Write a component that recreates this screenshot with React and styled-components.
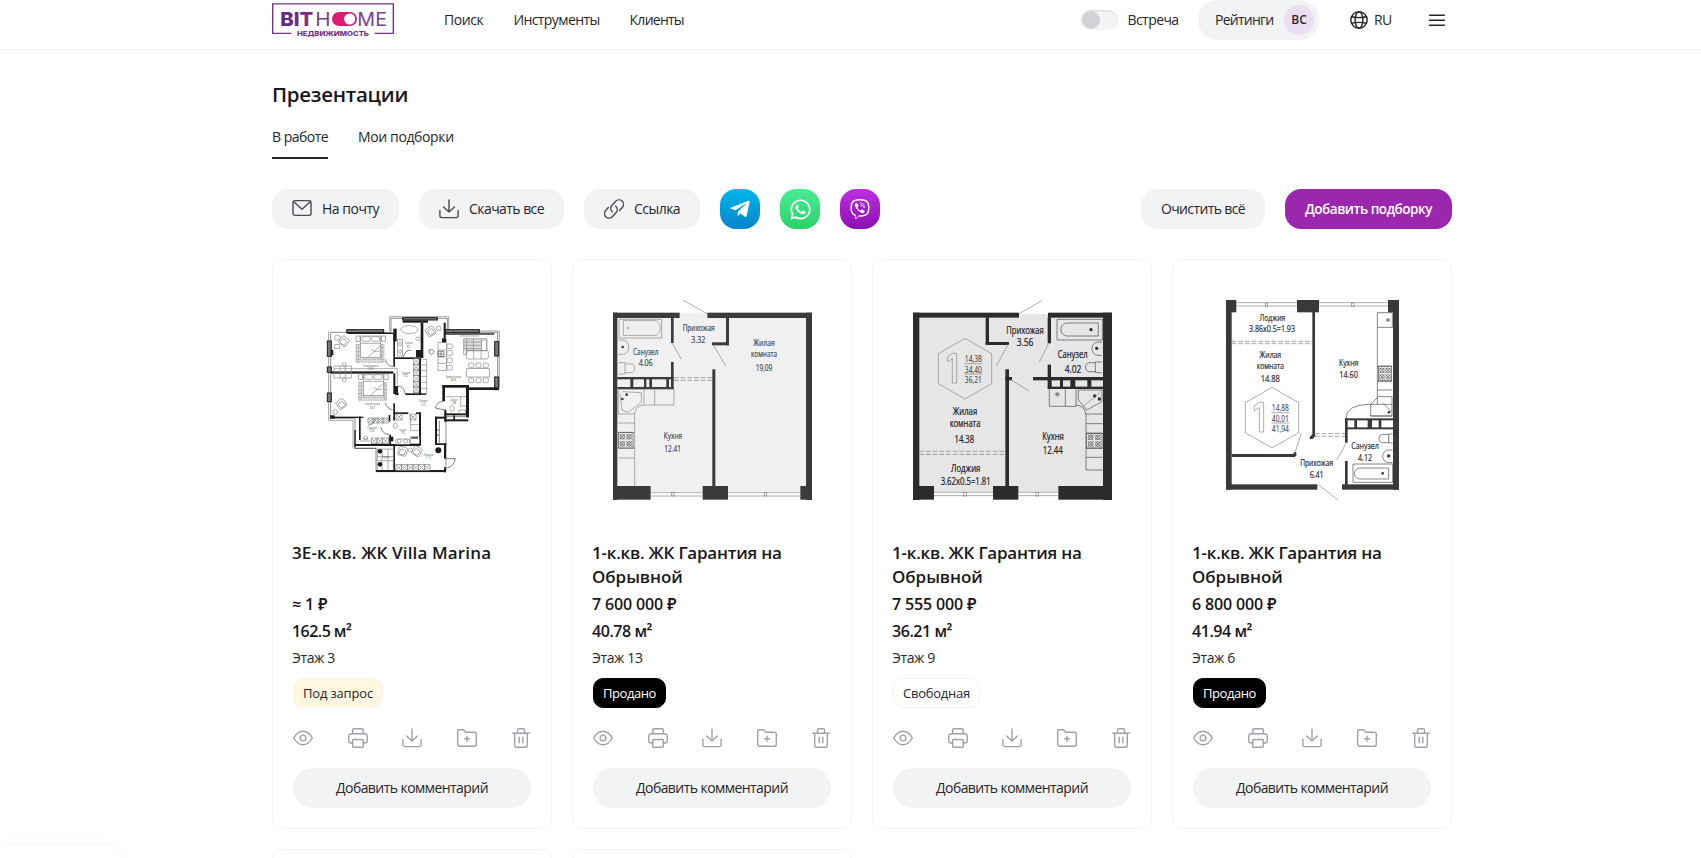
import React from 'react';
import styled, { createGlobalStyle, css } from 'styled-components';
import { FaWhatsapp, FaViber, FaTelegramPlane } from 'react-icons/fa';

const GlobalStyle = createGlobalStyle`
  *, *::before, *::after { box-sizing: border-box; }
  body {
    margin: 0;
    background: #fff;
    color: #27272b;
    font: 400 14px/20px "Open Sans", "Noto Sans", sans-serif;
  }
  button { font: inherit; color: inherit; border: 0; cursor: pointer; }
  svg { display: block; }
`;

const tracked = css`
  letter-spacing: ${(p) => p.$track || 0}px;
  white-space: nowrap;
`;

/* ---------- page frame ---------- */

const Page = styled.div`
  height: 100vh;
  overflow: hidden;
`;

const Container = styled.div`
  width: 1180px;
  margin-left: 272px;
`;

const Header = styled.header`
  height: 50px;
  border-bottom: 1px solid #f2f3f5;
`;

const HeaderRow = styled(Container)`
  display: flex;
  align-items: center;
  height: 40px;
  padding-right: 7px;
`;

const Nav = styled.nav`
  display: flex;
  gap: 30px;
  margin-left: 50px;
  flex: 1;
`;

const NavLink = styled.a`
  ${tracked}
`;

const Toggle = styled.span`
  width: 37px;
  height: 20px;
  border-radius: 10px;
  padding: 1px;
  background: #f3f4f6;
  box-shadow: inset 0 1px 2px rgba(0, 0, 0, 0.12);
`;

const Knob = styled.span`
  display: block;
  width: 18px;
  height: 18px;
  border-radius: 50%;
  background: #d1d1d6;
`;

const ToggleLabel = styled.span`
  ${tracked}
  margin: 0 19.5px 0 10px;
  width: 51px;
`;

const RatingButton = styled.button`
  display: flex;
  align-items: center;
  justify-content: space-between;
  width: 121px;
  height: 40px;
  padding: 0 5px 0 17px;
  border-radius: 20px;
  background: #f2f3f5;
`;

const RatingText = styled.span`
  ${tracked}
`;

const Avatar = styled.span`
  display: grid;
  place-items: center;
  width: 30px;
  height: 30px;
  border-radius: 50%;
  background: #ebdef0;
  font-size: 12px;
  font-weight: 600;
`;

const Language = styled.span`
  ${tracked}
  display: flex;
  align-items: center;
  gap: 6px;
  width: 42px;
  margin: 0 37px 0 31px;
`;

/* ---------- title, tabs, toolbar ---------- */

const Title = styled.h1`
  margin: 30px 0 19px;
  font-size: 20.5px;
  line-height: 28px;
  font-weight: 600;
  color: #18181b;
  letter-spacing: -0.28px;
`;

const Tabs = styled.div`
  display: flex;
  gap: 30px;
  margin-bottom: 30px;
`;

const Tab = styled.a`
  ${tracked}
  padding-bottom: 10px;
  border-bottom: 2px solid ${(p) => (p.$active ? '#27272b' : 'transparent')};
`;

const Toolbar = styled.div`
  display: flex;
  gap: 20px;
  margin-bottom: 30px;
`;

const ToolButton = styled.button`
  ${tracked}
  display: flex;
  align-items: center;
  gap: 10px;
  height: 40px;
  padding: 0 20px;
  border-radius: 16px;
  background: #f2f3f5;
  svg { color: #4a4a4f; }
`;

const ClearButton = styled(ToolButton)`
  margin-left: auto;
`;

const PrimaryButton = styled(ToolButton)`
  background: #9b27af;
  color: #fff;
  font-size: 13.5px;
  font-weight: 600;
`;

const Messenger = styled.button`
  display: grid;
  place-items: center;
  width: 40px;
  height: 40px;
  padding: 0;
  border-radius: 16px;
  color: #fff;
  background: linear-gradient(${(p) => p.$from}, ${(p) => p.$to});
`;

/* ---------- cards ---------- */

const Grid = styled.div`
  display: grid;
  grid-template-columns: repeat(4, 280px);
  gap: 20px;
`;

const CardBox = styled.article`
  height: 570px;
  padding: 20px;
  border: 1px solid #f2f3f5;
  border-radius: 10px;
`;

const PlanFrame = styled.div`
  display: grid;
  place-items: center;
  height: 240px;
  margin-bottom: 21px;
`;

const CardTitle = styled.h2`
  ${tracked}
  margin: 0 0 3px -1px;
  height: 48px;
  font-size: 17px;
  line-height: 24px;
  font-weight: 600;
  color: #18181b;
`;

const TitleTail = styled.span`
  display: block;
  letter-spacing: -0.05px;
`;

const Fact = styled.p`
  ${tracked}
  margin: 0 0 3px -1px;
  font-size: 16px;
  line-height: 24px;
  font-weight: 600;
  color: #18181b;
`;

const Floor = styled.p`
  ${tracked}
  margin: 0 0 8px -1px;
  line-height: 24px;
`;

const badgeTones = {
  request: css`background: #fff7df; border-color: #f2f3f5;`,
  sold: css`background: #000; border-color: #000; color: #fff;`,
  free: css`background: #fff; border-color: #f2f3f5;`,
};

const Badge = styled.div`
  ${tracked}
  display: flex;
  align-items: center;
  width: fit-content;
  height: 30px;
  padding: 0 9px;
  border: 1px solid;
  border-radius: 10px;
  font-size: 13px;
  ${(p) => badgeTones[p.$tone]}
`;

const Actions = styled.div`
  display: flex;
  justify-content: space-between;
  margin: 20px 0;
  color: #a1a1aa;
`;

const CommentButton = styled.button`
  ${tracked}
  width: 100%;
  height: 40px;
  padding: 0;
  border-radius: 20px;
  background: #f2f3f5;
`;

const DockPanel = styled.div`
  position: fixed;
  left: 0;
  bottom: 0;
  width: 120px;
  height: 12px;
  border-radius: 0 20px 0 0;
  background: #fff;
  box-shadow: 0 0 15px rgba(0, 0, 0, 0.05);
`;

/* ---------- icons ---------- */

const Line = styled.svg`
  fill: none;
  stroke: currentColor;
  stroke-width: ${(p) => p.$w || 1.4};
  stroke-linecap: round;
  stroke-linejoin: round;
  flex: none;
`;

const Icon = ({ children }) => (
  <Line width="20" height="20" viewBox="0 0 20 20">{children}</Line>
);

const MailIcon = () => (
  <Icon><rect x="1" y="1.6" width="18" height="14.8" rx="1.8" /><path d="M1.5 2.6 10 10.2l8.500-7.600" /></Icon>
);
const DownloadIcon = () => (
  <Icon><path d="M10 1v12M4.600 8 10 13l5.400-5M.9 11.500V16.600a2 2 0 0 0 2 2h14.200a2 2 0 0 0 2-2v-5.100" /></Icon>
);
const LinkIcon = () => (
  <Icon>
    <path d="M8.300 12.800a4.500 4.500 0 0 1-.5-6.300l3.900-4.200a4.500 4.500 0 0 1 6.600 6.200L15.600 11.400" />
    <path d="M11.700 7.200a4.500 4.500 0 0 1 .5 6.300l-3.900 4.200a4.500 4.500 0 0 1-6.600-6.200L4.400 8.600" />
  </Icon>
);
const EyeIcon = () => (
  <Icon><path d="M.7 10C3 6 6.300 3.200 10 3.200S17 6 19.300 10C17 14 13.700 16.800 10 16.800S3 14 .7 10Z" /><circle cx="10" cy="10" r="2.900" /></Icon>
);
const PrintIcon = () => (
  <Icon>
    <path d="M4.700 5.800V1.700a1 1 0 0 1 1-1h8.600a1 1 0 0 1 1 1v4.100M4.700 15H3a2.300 2.300 0 0 1-2.300-2.300V8A2.200 2.200 0 0 1 3 5.800h14A2.200 2.200 0 0 1 19.300 8v4.700A2.300 2.300 0 0 1 17 15h-1.700" />
    <rect x="4.700" y="11.500" width="10.600" height="7.800" rx="1" />
  </Icon>
);
const FolderIcon = () => (
  <Icon>
    <path d="M.7 3.200A1.500 1.500 0 0 1 2.200 1.700h4.300l2.200 2.600h8.800A1.800 1.800 0 0 1 19.300 6v10.500a1.800 1.800 0 0 1-1.800 1.800h-15A1.800 1.800 0 0 1 .7 16.500ZM10 8.300v5M7.500 10.800h5" />
  </Icon>
);
const TrashIcon = () => (
  <Icon>
    <path d="M1.700 5.300h16.600M3.700 5.300v12.400a1.500 1.500 0 0 0 1.500 1.500h9.600a1.500 1.500 0 0 0 1.500-1.500V5.300M6.500 5.300V2.200A1.400 1.400 0 0 1 7.900.8h4.200a1.400 1.400 0 0 1 1.400 1.400v3.100M8.200 9.300v5.500M11.800 9.300v5.500" />
  </Icon>
);
const GlobeIcon = () => (
  <Line width="18" height="18" viewBox="0 0 18 18">
    <circle cx="9" cy="9" r="8.200" /><ellipse cx="9" cy="9" rx="3.900" ry="8.200" /><path d="M1.600 5.800c4.500 1 10.300 1 14.800 0M1.600 12.200c4.500-1 10.300-1 14.800 0" />
  </Line>
);
const MenuIcon = () => (
  <Line width="16" height="14" viewBox="0 0 16 14"><path d="M.5 2.300h15M.5 7.300h15M.5 12.200h15" /></Line>
);

const Logo = () => (
  <svg width="122" height="34" viewBox="36 9 366 102" fontFamily="Inter, sans-serif">
    <defs>
      <linearGradient id="brand" x1="0" x2="1"><stop offset="0" stopColor="#5c2a86" /><stop offset="1" stopColor="#8b2c80" /></linearGradient>
      <linearGradient id="pill" x1="0" x2="1"><stop offset="0" stopColor="#e6156b" /><stop offset="1" stopColor="#c02c7d" /></linearGradient>
    </defs>
    <path d="M94 100H38V11.500H400V100H344" fill="none" stroke="#703585" strokeWidth="4.200" />
    <text x="61" y="78" fontSize="57" fontWeight="800" fill="url(#brand)" textLength="99" lengthAdjust="spacingAndGlyphs">BIT</text>
    <text x="166" y="78" fontSize="57" fontWeight="400" fill="#7c4290" textLength="46" lengthAdjust="spacingAndGlyphs">H</text>
    <rect x="216" y="36" width="75" height="42" rx="21" fill="url(#pill)" />
    <circle cx="269" cy="57" r="16.500" fill="#fff" />
    <text x="292" y="78" fontSize="57" fontWeight="400" fill="#7c4290" textLength="89" lengthAdjust="spacingAndGlyphs">ME</text>
    <text x="111" y="107.500" fontSize="20" fontWeight="800" fill="#703585" textLength="216" lengthAdjust="spacingAndGlyphs">НЕДВИЖИМОСТЬ</text>
  </svg>
);

/* ---------- floor plans ---------- */

const PlanSvg = styled.svg`
  font-family: "Open Sans", sans-serif;
  font-size: 28px;
  .w { fill: ${(p) => p.$wall}; }
  .l { fill: none; stroke: #85858a; stroke-width: 2; }
  .k { fill: none; stroke: #4a4a4d; stroke-width: 2; }
  .d { fill: none; stroke: #929296; stroke-width: 2.5; stroke-dasharray: 14 6; }
  text { fill: ${(p) => p.$ink}; stroke: ${(p) => p.$ink}; stroke-width: ${(p) => (p.$fine ? 0 : 0.7)}px; }
  .mark text { stroke-width: 0.3px; fill: #4c4c50; }
`;

/* A caption centred on x and squeezed to the given width. */
const Cap = ({ x, y, w, children, size }) => (
  <text x={x - w / 2} y={y} textLength={w} lengthAdjust="spacingAndGlyphs" fontSize={size}>{children}</text>
);

const Walls = ({ list }) => list.map(([x, y, w, h]) => <rect key={`${x}-${y}-${w}`} className="w" x={x} y={y} width={w} height={h} />);

const Hob = ({ x, y, w, h }) => (
  <g className="k">
    <rect x={x} y={y} width={w} height={h} />
    {[0.27, 0.73].map((a) => [0.27, 0.73].map((b) => (
      <g key={`${a}${b}`}>
        <circle cx={x + w * a} cy={y + h * b} r="7" />
        <path d={`M${x + w * a - 8} ${y + h * b - 8}l16 16m0-16l-16 16`} />
      </g>
    )))}
  </g>
);

const AreaMark = ({ cx, cy, lines }) => (
  <g className="mark">
    <path className="l" d={`M${cx} ${cy - 91}L${cx + 80} ${cy - 45}V${cy + 45}L${cx} ${cy + 91}L${cx - 80} ${cy + 45}V${cy - 45}Z`} />
    <path className="l" d={`M${cx - 54} ${cy - 34}L${cx - 38} ${cy - 46}H${cx - 25}V${cy + 43}H${cx - 38}V${cy - 30}L${cx - 52} ${cy - 21}Z`} />
    <path className="l" d={`M${cx - 2} ${cy - 15}h54M${cx - 2} ${cy + 16}h54`} />
    <Cap x={cx + 25} y={cy - 19} w={51} size={26}>{lines[0]}</Cap>
    <Cap x={cx + 25} y={cy + 12} w={51} size={26}>{lines[1]}</Cap>
    <Cap x={cx + 25} y={cy + 43} w={51} size={26}>{lines[2]}</Cap>
  </g>
);

const PlanGrey = () => (
  <PlanSvg width="200" height="200" viewBox="36 30 600 600" $wall="#3b3b3c" $ink="#4d4d50">
    <path d="M52 84H618V606H52Z" fill="#f0f0f0" />
    <rect x="240" y="68" width="82" height="20" fill="#f0f0f0" />
    <Walls list={[[39, 68, 200, 16], [322, 68, 314, 16], [39, 68, 13, 562], [618, 68, 18, 562], [39, 588, 113, 41], [308, 588, 76, 41], [601, 588, 35, 41], [337, 238, 9, 352], [378, 84, 9, 82], [336, 157, 51, 9], [213, 84, 8, 75], [213, 216, 8, 80], [52, 261, 169, 7], [52, 291, 169, 6], [91, 264, 9, 30], [132, 264, 7, 30], [148, 264, 8, 30], [199, 264, 8, 30]]} />
    <path className="l" d="M250 31L322 72M217 160L244 208M341 166L377 228M152 608H308M152 618H308M384 608H601M384 618H601M57 88H185V144H57ZM70 92H165a16 22 0 0 1 0 44H70ZM55 298H222V345H132Q106 347 104 372H55ZM132 299V345M164 299V345M60 310L66 360L84 367M68 305L124 308V337L84 367M104 372V588M55 399H104M55 427H104M55 475H104M55 504H104M55 150h14a17 21 0 0 1 0 43h-14M55 218h20v34h-20M75 222h22a12 14 0 0 1 0 26h-22" />
    <rect x="214" y="607" width="8" height="11" className="l" /><rect x="493" y="607" width="7" height="11" className="l" />
    <circle cx="85" cy="114" r="3" className="l" /><circle cx="68" cy="171" r="4" className="w" /><circle cx="67" cy="327" r="4" className="w" /><circle cx="80" cy="314" r="4" className="w" />
    <path className="d" d="M222 263H337M222 271H337" />
    <Hob x={55} y={428} w={44} h={46} />
    <Cap x={296} y={123} w={96}>Прихожая</Cap><Cap x={295} y={159} w={42}>3.32</Cap>
    <Cap x={492} y={169} w={64}>Жилая</Cap><Cap x={492} y={201} w={78}>комната</Cap><Cap x={492} y={242} w={50}>19,09</Cap>
    <Cap x={137} y={194} w={76}>Санузел</Cap><Cap x={137} y={228} w={42}>4.06</Cap>
    <Cap x={219} y={446} w={55}>Кухня</Cap><Cap x={218} y={486} w={50}>12.41</Cap>
  </PlanSvg>
);

const PlanDark = () => (
  <PlanSvg width="200" height="200" viewBox="36 30 600 600" $wall="#2c2c2e" $ink="#232325">
    <path d="M52 82H612V606H52Z" fill="#e6e6e7" />
    <rect x="358" y="72" width="86" height="20" fill="#e6e6e7" />
    <Walls list={[[39, 68, 318, 15], [444, 68, 192, 15], [39, 68, 19, 562], [609, 68, 27, 562], [39, 588, 63, 41], [279, 588, 76, 41], [475, 588, 161, 41], [257, 82, 10, 82], [257, 156, 70, 9], [316, 238, 11, 352], [316, 261, 20, 10], [399, 261, 210, 10], [443, 82, 10, 78], [443, 224, 10, 46], [443, 290, 166, 7], [443, 264, 12, 30], [480, 264, 9, 30], [511, 264, 15, 30], [562, 264, 12, 30]]} />
    <path className="l" d="M358 71L427 31M325 162L289 228M446 160L418 216M336 271L386 302M102 607H279M102 617H279M355 607H475M355 617H475" />
    <path className="k" d="M471 88H607V150H471ZM595 99V138H501a18 19 0 0 1 0-39ZM448 298V349H528V298M496 298V349M528 345Q555 347 557 372H608M535 300V330L560 360L606 335V300ZM558 372V540H608M558 401H608M558 429H608M558 475H608M558 502H608M606 156h-12a18 20 0 0 0 0 40h12M606 216h-20v32h20M586 218h-20a13 14 0 0 0 0 27h20M464 313h16M468 306l8 14M476 306l-8 14" />
    <rect x="191" y="607" width="8" height="11" className="l" /><rect x="408" y="607" width="8" height="11" className="l" />
    <circle cx="573" cy="119" r="5" className="w" /><circle cx="590" cy="175" r="5" className="w" /><circle cx="584" cy="318" r="5" className="w" /><circle cx="598" cy="327" r="5" className="w" />
    <path className="l" d="M548 350L600 308" />
    <path className="d" d="M58 484H316M58 493H316" />
    <Hob x={560} y={430} w={46} h={44} />
    <AreaMark cx={195} cy={236} lines={['14,38', '34,40', '36,21']} />
    <Cap x={375} y={131} w={112} size={30}>Прихожая</Cap><Cap x={375} y={167} w={50} size={30}>3.56</Cap>
    <Cap x={518} y={205} w={90} size={30}>Санузел</Cap><Cap x={519} y={248} w={50} size={30}>4.02</Cap>
    <Cap x={195} y={375} w={73} size={30}>Жилая</Cap><Cap x={195} y={412} w={92} size={30}>комната</Cap><Cap x={193} y={459} w={59} size={30}>14.38</Cap>
    <Cap x={197} y={545} w={88} size={30}>Лоджия</Cap><Cap x={197} y={585} w={150} size={30}>3.62x0.5=1.81</Cap>
    <Cap x={459} y={450} w={65} size={30}>Кухня</Cap><Cap x={458} y={493} w={60} size={30}>12.44</Cap>
  </PlanSvg>
);

const PlanWhite = () => (
  <PlanSvg width="200" height="200" viewBox="6 30 600 600" $wall="#39393b" $ink="#303033">
    <Walls list={[[48, 30, 17, 569], [549, 30, 18, 569], [48, 30, 31, 37], [261, 30, 66, 37], [534, 30, 33, 37], [307, 66, 8, 372], [48, 583, 274, 16], [396, 583, 171, 16], [65, 492, 190, 9], [405, 385, 144, 6], [405, 412, 144, 6], [405, 385, 8, 73], [405, 513, 8, 72], [433, 388, 8, 26], [473, 388, 13, 26], [506, 388, 8, 26]]} />
    <path className="w" d="M299 441l10-10 8 5-8 10-9 2zM249 494l4-8 6 1v12h-8z" />
    <path className="l" d="M79 38H261M79 48H261M327 38H534M327 48H534M327 585L384 630M255 488L274 430M408 460L381 510" />
    <path className="k" d="M502 68H547V112H502ZM502 112V343H547M502 228H547M502 275H547M502 300H547M502 343H475Q406 345 408 387M482 378V343L505 320H546V378ZM482 378H546M520 340L545 366M429 522H548V577H429ZM527 90h14M530 84l8 12M538 84l-8 12" />
    <path className="k" d="M536 534V567H450a16 16 0 0 1 0-33ZM548 432h-12v27h12M536 433h-20a13 13 0 0 0 0 25h20M548 480h-12a18 19 0 0 0 0 38h12" />
    <rect x="166" y="39" width="7" height="10" className="l" /><rect x="424" y="39" width="8" height="10" className="l" />
    <circle cx="518" cy="550" r="4" className="w" /><circle cx="536" cy="498" r="5" className="w" /><circle cx="537" cy="367" r="4" className="w" />
    <path className="d" d="M65 154H307M65 161H307M315 431H405M315 439H405" />
    <Hob x={505} y={230} w={40} h={42} />
    <AreaMark cx={186} cy={383} lines={['14,88', '40,01', '41,94']} />
    <Cap x={187} y={92} w={77}>Лоджия</Cap><Cap x={186} y={126} w={138}>3.86x0.5=1.93</Cap>
    <Cap x={181} y={203} w={65}>Жилая</Cap><Cap x={181} y={236} w={81}>комната</Cap><Cap x={181} y={277} w={57}>14.88</Cap>
    <Cap x={416} y={227} w={58}>Кухня</Cap><Cap x={416} y={263} w={56}>14.60</Cap>
    <Cap x={320} y={529} w={99}>Прихожая</Cap><Cap x={320} y={564} w={42}>6.41</Cap>
    <Cap x={465} y={478} w={82}>Санузел</Cap><Cap x={465} y={514} w={42}>4.12</Cap>
  </PlanSvg>
);

const Bed = ({ x, y }) => (
  <g>
    <rect x={x} y={y + 25} width="84" height="54" fill="#dedede" />
    <path className="l" d={`M${x} ${y + 25}h84v54h-84zM${x} ${y + 35}h84M${x} ${y + 47}h84M${x} ${y + 59}h84M${x} ${y + 70}h84M${x + 7} ${y + 25}v54M${x + 77} ${y + 25}v54`} strokeDasharray="4 3" />
    <rect x={x + 14} y={y} width="60" height="65" fill="#fff" />
    <g className="l">
      <rect x={x + 14} y={y} width="60" height="65" />
      <rect x={x + 18} y={y + 2} width="24" height="14" rx="3" /><rect x={x + 46} y={y + 2} width="24" height="14" rx="3" />
      <path d={`M${x + 14} ${y + 22}h60M${x + 35} ${y + 65}l38-36M${x + 45} ${y + 40}q14 12 26 4`} />
      <rect x={x} y={y} width="12" height="16" /><rect x={x + 76} y={y} width="12" height="16" />
    </g>
  </g>
);

const Armchair = ({ x, y, r }) => (
  <g className="l" transform={`rotate(${r} ${x} ${y})`}><rect x={x - 13} y={y - 13} width="26" height="26" rx="5" /><rect x={x - 8} y={y - 6} width="16" height="16" rx="3" /></g>
);

const Wardrobe = ({ x, y, n, vertical, s = 20 }) => (
  <g className="l">
    {Array.from({ length: n }, (_, i) => {
      const px = vertical ? x : x + i * s;
      const py = vertical ? y + i * s : y;
      return <g key={i}><rect x={px} y={py} width={s} height={s} /><path d={`M${px} ${py}l${s} ${s}m0-${s}l-${s} ${s}`} /></g>;
    })}
  </g>
);

/* Window sections of the outer wall: two dark edges with a pale core. */
const windows = [[109, 88, 113, 11], [277, 52, 106, 9], [405, 88, 104, 11], [51, 122, 14, 48], [51, 200, 14, 18], [51, 278, 14, 28], [553, 124, 14, 45], [553, 230, 14, 40]];

const PlanVilla = () => (
  <PlanSvg width="200" height="200" viewBox="6 0 600 600" $wall="#1c1c1e" $ink="#444" $fine>
    <path d="M62 97V355H135V445H198V515H408V350H475V268H563V97H412V55H243V97Z" fill="none" stroke="#77777a" strokeWidth="2.500" />
    <path d="M56 93V361H129V445M239 93V50H416V93H568V262" fill="none" stroke="#77777a" strokeWidth="2" />
    <g fill="#77777a" stroke="#1c1c1e" strokeWidth="3">{windows.map(([x, y, w, h]) => <rect key={`${x}-${y}`} x={x + 1} y={y + 1} width={w - 2} height={h - 2} />)}</g>
    <Walls list={[[278, 61, 76, 7], [112, 98, 138, 4], [250, 86, 10, 38], [250, 100, 5, 100], [62, 214, 188, 7], [250, 220, 6, 40], [250, 258, 14, 24], [254, 172, 78, 5], [332, 68, 8, 106], [327, 175, 6, 108], [255, 280, 11, 5], [286, 280, 62, 5], [401, 68, 6, 48], [396, 115, 13, 13], [405, 100, 148, 4], [397, 255, 80, 8], [470, 262, 95, 8], [397, 256, 8, 48], [468, 262, 9, 90], [403, 329, 6, 36], [403, 340, 72, 6], [403, 358, 72, 6], [62, 150, 8, 16], [60, 346, 14, 10], [60, 350, 100, 4], [147, 350, 5, 70], [133, 390, 4, 52], [250, 310, 5, 52], [236, 345, 5, 20], [250, 337, 45, 5], [318, 337, 13, 5], [327, 337, 6, 100], [375, 350, 34, 6], [375, 350, 6, 82], [375, 430, 34, 5], [238, 404, 5, 34], [135, 432, 195, 6], [250, 435, 5, 78], [402, 430, 6, 46], [402, 502, 6, 15], [198, 510, 210, 6], [430, 346, 5, 14], [318, 150, 16, 22]]} />
    <g stroke="#333" fill="none" strokeWidth="1.800"><path d="M133 445H200M388 362v70M248 330q-18-4-22-22M226 178q6 22 24 22M304 150q-20 0-24 22M286 282q-4-24-22-24M212 380q4 22 26 24M174 376q20-2 22-22M398 304q-18 2-22 20l28 6M408 476h28q-4 24-26 28" /></g>
    <Bed x={138} y={108} /><Bed x={146} y={222} />
    <Armchair x={102} y={124} r={35} /><Armchair x={94} y={312} r={-35} /><Armchair x={362} y={94} r={-30} /><Armchair x={278} y={454} r={15} /><Armchair x={321} y={454} r={30} />
    <rect x="461" y="116" width="54" height="36" fill="#dcdcdc" />
    <g className="l">
      <circle cx="82" cy="113" r="8" /><circle cx="76" cy="336" r="7" /><circle cx="386" cy="85" r="7" /><rect x="74" y="134" width="14" height="12" />
      <ellipse cx="298" cy="89" rx="26" ry="12" /><rect x="262" y="118" width="15" height="50" /><ellipse cx="270" cy="132" rx="4" ry="6" /><ellipse cx="270" cy="155" rx="4" ry="6" /><ellipse cx="324" cy="116" rx="7" ry="5" />
      <path d="M72 198H124V234H72ZM72 206H262V255M72 216H124M90 198V234M106 198V234" /><circle cx="103" cy="194" r="6" /><circle cx="103" cy="240" r="6" />
      <rect x="384" y="128" width="25" height="84" /><path d="M384 150h25M384 170h25M384 190h25" />
      <path d="M334 178h16v104h-16M334 195h16M334 212h16M334 229h16M334 247h16M334 265h16" />
      {[138, 158, 180, 202].map((y) => <rect key={y} x="411" y={y - 6} width="16" height="14" rx="3" />)}
      <path d="M461 116h68v36h-60v12h-8ZM461 126h53M461 136h53M461 146h53M470 116v48M490 116v36" /><rect x="514" y="120" width="17" height="32" />
      <rect x="469" y="152" width="66" height="25" rx="4" /><path d="M491 153v24M513 153v24" />
      <rect x="470" y="206" width="68" height="25" />
      {[476, 498, 520].map((x) => <g key={x}><rect x={x} y="189" width="15" height="14" rx="3" /><rect x={x} y="234" width="15" height="14" rx="3" /></g>)}
      <path d="M448 108h60M452 290v28h16M408 290h60M302 342v50h24M302 374h24" />
      <ellipse cx="426" cy="325" rx="6" ry="9" /><ellipse cx="256" cy="377" rx="6" ry="8" /><rect x="447" y="330" width="20" height="11" /><circle cx="301" cy="450" r="6" />
      <path d="M202 447H250V510M202 447V510M202 470H250M202 482H250M216 447V510M234 447V510M150 423h32M158 416h16" /><circle cx="167" cy="414" r="6" />
      <rect x="258" y="417" width="40" height="16" /><circle cx="268" cy="424" r="6" /><circle cx="287" cy="424" r="6" /><rect x="302" y="410" width="26" height="20" />
    </g>
    <Wardrobe x={310} y={176} n={6} s={17} vertical /><Wardrobe x={174} y={354} n={4} s={15} /><Wardrobe x={184} y={414} n={3} s={17} /><Wardrobe x={258} y={494} n={6} s={17} /><Wardrobe x={300} y={342} n={1} s={18} /><Wardrobe x={258} y={342} n={1} s={18} />
    <g className="w"><circle cx="210" cy="454" r="7" /><circle cx="210" cy="493" r="7" /><circle cx="385" cy="451" r="9" /><circle cx="384" cy="390" r="2" /><circle cx="384" cy="405" r="2" /><rect x="238" y="410" width="12" height="14" /><rect x="304" y="412" width="20" height="4" /></g>
    <path className="k" d="M384 154h18v16h-18zM393 154v16M384 162h18M357 150l10-2 6 8-8 8-7-5z" />
    <g fontSize="9">
      <Cap x={182} y={200} w={44} size={9}>Спальня хозяев</Cap><Cap x={182} y={211} w={16} size={9}>19.0</Cap><Cap x={187} y={316} w={44} size={9}>Спальня гостевая</Cap><Cap x={187} y={327} w={16} size={9}>20.3</Cap>
      <Cap x={430} y={233} w={46}>Кухня-гостиная</Cap><Cap x={430} y={243} w={16}>43.8</Cap><Cap x={297} y={133} w={24}>Санузел</Cap><Cap x={297} y={143} w={12}>8.1</Cap>
      <Cap x={287} y={222} w={26}>Гардероб</Cap><Cap x={287} y={232} w={12}>9.2</Cap><Cap x={340} y={307} w={24}>Коридор</Cap><Cap x={340} y={318} w={14}>12.5</Cap>
      <Cap x={432} y={304} w={22}>Санузел</Cap><Cap x={432} y={313} w={12}>3.8</Cap><Cap x={278} y={392} w={22}>Санузел</Cap><Cap x={278} y={402} w={12}>7.0</Cap>
      <Cap x={186} y={388} w={28}>Гардероб</Cap><Cap x={186} y={397} w={14}>10.4</Cap><Cap x={355} y={468} w={28}>Прихожая</Cap><Cap x={355} y={478} w={14}>11.3</Cap><Cap x={228} y={474} w={24}>Терраса</Cap>
    </g>
  </PlanSvg>
);

/* ---------- data ---------- */

const guarantee = { title: '1-к.кв. ЖК Гарантия на', tail: 'Обрывной', titleTrack: -0.23 };

const flats = [
  { id: 1, Plan: PlanVilla, title: '3Е-к.кв. ЖК Villa Marina', titleTrack: 0.14, price: '≈ 1 ₽', area: '162.5 м²', areaTrack: -0.55, floor: 3, tone: 'request', status: 'Под запрос', statusTrack: -0.17 },
  { id: 2, Plan: PlanGrey, ...guarantee, price: '7 600 000 ₽', area: '40.78 м²', floor: 13, tone: 'sold', status: 'Продано', statusTrack: -0.43 },
  { id: 3, Plan: PlanDark, ...guarantee, price: '7 555 000 ₽', area: '36.21 м²', floor: 9, tone: 'free', status: 'Свободная', statusTrack: -0.25 },
  { id: 4, Plan: PlanWhite, ...guarantee, price: '6 800 000 ₽', area: '41.94 м²', floor: 6, tone: 'sold', status: 'Продано', statusTrack: -0.43 },
];

const FlatCard = ({ flat }) => (
  <CardBox>
    <PlanFrame><flat.Plan /></PlanFrame>
    <CardTitle $track={flat.titleTrack}>{flat.title}{flat.tail && <TitleTail>{flat.tail}</TitleTail>}</CardTitle>
    <Fact $track={-0.14}>{flat.price}</Fact>
    <Fact $track={flat.areaTrack || -0.45}>{flat.area}</Fact>
    <Floor $track={-0.36}>Этаж {flat.floor}</Floor>
    <Badge $tone={flat.tone} $track={flat.statusTrack}>{flat.status}</Badge>
    <Actions><EyeIcon /><PrintIcon /><DownloadIcon /><FolderIcon /><TrashIcon /></Actions>
    <CommentButton $track={-0.56}>Добавить комментарий</CommentButton>
  </CardBox>
);

export default function App() {
  return (
    <Page>
      <GlobalStyle />
      <Header>
        <HeaderRow>
          <Logo />
          <Nav>
            <NavLink $track={-0.4}>Поиск</NavLink>
            <NavLink $track={-0.6}>Инструменты</NavLink>
            <NavLink $track={-0.75}>Клиенты</NavLink>
          </Nav>
          <Toggle><Knob /></Toggle>
          <ToggleLabel $track={-0.57}>Встреча</ToggleLabel>
          <RatingButton>
            <RatingText $track={-0.75}>Рейтинги</RatingText>
            <Avatar>ВС</Avatar>
          </RatingButton>
          <Language $track={-0.6}><GlobeIcon />RU</Language>
          <MenuIcon />
        </HeaderRow>
      </Header>
      <Container>
        <Title>Презентации</Title>
        <Tabs>
          <Tab $active $track={-0.52}>В работе</Tab>
          <Tab $track={-0.38}>Мои подборки</Tab>
        </Tabs>
        <Toolbar>
          <ToolButton $track={-0.49}><MailIcon />На почту</ToolButton>
          <ToolButton $track={-0.56}><DownloadIcon />Скачать все</ToolButton>
          <ToolButton $track={-0.55}><LinkIcon />Ссылка</ToolButton>
          <Messenger $from="#00b7eb" $to="#0383cb"><FaTelegramPlane size={22} /></Messenger>
          <Messenger $from="#4ceb96" $to="#28d366"><FaWhatsapp size={23} /></Messenger>
          <Messenger $from="#bd2fe0" $to="#8d10b0"><FaViber size={20} /></Messenger>
          <ClearButton $track={-0.63}>Очистить всё</ClearButton>
          <PrimaryButton $track={-0.46}>Добавить подборку</PrimaryButton>
        </Toolbar>
        <Grid>
          {flats.map((flat) => <FlatCard key={flat.id} flat={flat} />)}
          <CardBox />
          <CardBox />
        </Grid>
      </Container>
      <DockPanel />
    </Page>
  );
}
